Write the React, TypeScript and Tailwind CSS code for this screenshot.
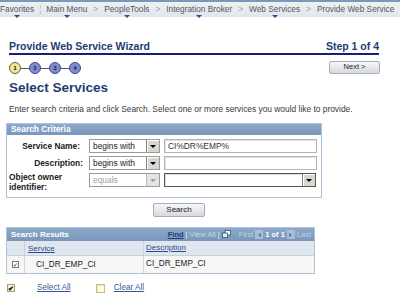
import React from "react";

const crumbs = [
  { label: "Favorites", mark: true },
  { label: "Main Menu", mark: true },
  { label: "PeopleTools", mark: true },
  { label: "Integration Broker", mark: true },
  { label: "Web Services", mark: true },
  { label: "Provide Web Service", mark: false },
];

function DropBtn() {
  return (
    <span className="flex h-full w-[13px] items-center justify-center border-l border-[#808080] bg-[#d8d6d0] shadow-[inset_1px_1px_0_#fff]">
      <span className="h-0 w-0 border-x-[3px] border-t-[3px] border-x-transparent border-t-black" />
    </span>
  );
}

function Select({ value, disabled }: { value: string; disabled?: boolean }) {
  return (
    <div className="flex h-[14px] w-[71px] items-stretch border border-[#9a9a9a] bg-white">
      <span className={`flex-1 pl-[3px] leading-[12px] ${disabled ? "text-[#a0a0a0]" : "text-[#222]"}`}>{value}</span>
      {disabled ? (
        <span className="flex h-full w-[13px] items-center justify-center border-l border-[#b8b8b8] bg-[#e4e4e4]">
          <span className="h-0 w-0 border-x-[3px] border-t-[3px] border-x-transparent border-t-[#a0a0a0]" />
        </span>
      ) : (
        <DropBtn />
      )}
    </div>
  );
}

function Input({ value }: { value?: string }) {
  return (
    <div className="h-[14px] w-[153px] border border-[#b4b4b4] bg-white pl-[3px] leading-[12px] text-[#333] shadow-[inset_1px_1px_0_#e0e0e0]">
      {value}
    </div>
  );
}

function Circle({ n, active }: { n: number; active?: boolean }) {
  return (
    <span
      className={`flex h-[12px] w-[12px] items-center justify-center rounded-full border text-[5.5px] font-bold ${
        active ? "border-[#6b6030] bg-[#f6e39a] text-black" : "border-[#3e4a8a] bg-[#7f8ad0] text-[#10184a]"
      }`}
    >
      {n}
    </span>
  );
}

export default function App() {
  return (
    <div className="relative h-[298px] w-[400px] overflow-hidden bg-white text-[8.4px] text-[#333]" style={{ fontFamily: '"Liberation Sans", Arial, sans-serif' }}>
      {/* breadcrumb bar */}
      <div className="flex h-[17px] items-center whitespace-nowrap border-t-2 border-[#7b98bb] bg-gradient-to-b from-[#eef0f3] to-[#e2e5ea] pb-[1px] text-[8.3px] text-[#505862]">
        {crumbs.map((c, i) => (
          <React.Fragment key={c.label}>
            {i === 1 && <span className="mx-[5px] text-[#b0b4ba]">¦</span>}
            {i > 1 && <span className="mx-[6px] text-[#9aa0a8]">&gt;</span>}
            <span className="relative">
              {c.label}
              {c.mark && (
                <span className="absolute bottom-[-3px] left-1/2 h-0 w-0 -translate-x-1/2 border-x-[3px] border-t-[3px] border-x-transparent border-t-[#2a4c9a]" />
              )}
            </span>
          </React.Fragment>
        ))}
      </div>

      {/* wizard header */}
      <div className="ml-[9px] mt-[23px] w-[370px]">
        <div className="flex items-end justify-between border-b-2 border-[#1c1c78] pb-[1px] text-[10.5px] font-bold leading-[12px] text-[#1e3a78]">
          <span>Provide Web Service Wizard</span>
          <span>Step 1 of 4</span>
        </div>
        <div className="mt-[5px] flex items-center justify-between">
          <div className="mt-[2px] flex items-center">
            <Circle n={1} active />
            <span className="h-px w-[8px] bg-[#555]" />
            <Circle n={2} />
            <span className="h-px w-[8px] bg-[#555]" />
            <Circle n={3} />
            <span className="h-px w-[8px] bg-[#555]" />
            <Circle n={4} />
          </div>
          <button className="mr-[-1px] flex h-[13px] w-[51px] items-center justify-center rounded-[2px] border border-[#a8acb4] bg-gradient-to-b from-[#f6f7f9] to-[#d6dae0] text-[7.5px] text-[#222]">
            Next &gt;
          </button>
        </div>
        <div className="mt-[6px] text-[13.5px] font-bold leading-[16px] text-[#1f3c74]">Select Services</div>
        <div className="mt-[8px] leading-[10px] text-[#3a3a3a]">
          Enter search criteria and click Search. Select one or more services you would like to provide.
        </div>
      </div>

      {/* search criteria */}
      <div className="ml-[6px] mt-[9px] w-[316px] border border-[#b0c2d8]">
        <div className="flex h-[11px] items-center bg-gradient-to-b from-[#8eaacb] to-[#7896bb] pl-[4px] text-[8.4px] font-bold text-white">
          Search Criteria
        </div>
        <div className="flex flex-col gap-[3px] pb-[5px] pt-[4px]">
          <div className="flex items-center">
            <span className="w-[76px] pr-[3px] text-right font-bold text-[#222]">Service Name:</span>
            <span className="ml-[6px]" />
            <Select value="begins with" />
            <span className="ml-[4px]" />
            <Input value="CI%DR%EMP%" />
          </div>
          <div className="flex items-center">
            <span className="w-[76px] text-right font-bold text-[#222]">Description:</span>
            <span className="ml-[6px]" />
            <Select value="begins with" />
            <span className="ml-[4px]" />
            <Input />
          </div>
          <div className="flex items-start">
            <span className="w-[76px] pl-[2px] font-bold leading-[9.5px] text-[#222]">
              Object owner
              <br />
              identifier:
            </span>
            <span className="ml-[6px]" />
            <Select value="equals" disabled />
            <span className="ml-[4px]" />
            <div className="flex h-[14px] w-[152px] items-stretch border border-[#555] bg-white shadow-[inset_1px_1px_0_#ddd]">
              <span className="flex-1" />
              <DropBtn />
            </div>
          </div>
        </div>
      </div>

      <div className="ml-[153px] mt-[5px]">
        <button className="flex h-[14px] w-[52px] items-center justify-center rounded-[2px] border border-[#a8acb4] bg-gradient-to-b from-[#f6f7f9] to-[#d6dae0] text-[8px] text-[#222]">
          Search
        </button>
      </div>

      {/* search results */}
      <div className="ml-[6px] mt-[10px] w-[309px] border border-[#b0c2d8]">
        <div className="flex h-[13px] items-center justify-between bg-gradient-to-b from-[#8eaacb] to-[#7896bb] pl-[4px] pr-[3px] text-[8px]">
          <span className="font-bold text-white">Search Results</span>
          <span className="flex items-center gap-[2px] text-[7.5px]">
            <span className="font-bold text-[#1e3a78] underline">Find</span>
            <span className="text-[#e8eef6]">|</span>
            <span className="text-[#c9d6e6]">View All</span>
            <span className="text-[#e8eef6]">|</span>
            <svg width="9" height="8" viewBox="0 0 9 8" className="mb-[2px]">
              <rect x="3" y="0.5" width="5.5" height="4.5" fill="#fff" stroke="#33507a" strokeWidth="0.8" />
              <rect x="0.5" y="3" width="5" height="4.5" fill="#e8eef6" stroke="#33507a" strokeWidth="0.8" />
            </svg>
            <span className="ml-[6px] text-[#c2d0e2]">First</span>
            <span className="flex h-[9px] w-[8px] items-center justify-center bg-[#a9bdd6]">
              <span className="h-0 w-0 border-y-[2.5px] border-r-[3px] border-y-transparent border-r-[#5a7498]" />
            </span>
            <span className="font-bold text-white">1 of 1</span>
            <span className="flex h-[9px] w-[8px] items-center justify-center bg-[#a9bdd6]">
              <span className="h-0 w-0 border-y-[2.5px] border-l-[3px] border-y-transparent border-l-[#5a7498]" />
            </span>
            <span className="text-[#c2d0e2]">Last</span>
          </span>
        </div>
        <div className="flex h-[15px] items-center border-b border-[#c8d0da] bg-[#dfe6ee] text-[8px] text-[#2a4c86]">
          <span className="h-full w-[18px] border-r border-[#c8d0da]" />
          <span className="h-full w-[119px] border-r border-[#c8d0da] pl-[3px] leading-[15px] underline">Service</span>
          <span className="pl-[2px] underline">Description</span>
        </div>
        <div className="flex h-[17px] items-center bg-[#f6f6f6] text-[8.2px] text-[#222]">
          <span className="flex h-full w-[18px] items-center justify-center border-r border-[#d4d4d4]">
            <span className="flex h-[7px] w-[7px] items-center justify-center border border-[#777] bg-white text-[6px] leading-none text-black">✓</span>
          </span>
          <span className="h-full w-[119px] border-r border-[#d4d4d4] pl-[11px] leading-[17px]">CI_DR_EMP_CI</span>
          <span className="pl-[2px]">CI_DR_EMP_CI</span>
        </div>
      </div>

      {/* bottom links */}
      <div className="ml-[7px] mt-[8px] flex items-center text-[8.2px] text-[#3a5a92]">
        <span className="flex h-[8px] w-[8px] items-center justify-center border border-[#a8a070] bg-[#f4f0d8] text-[7px] font-bold leading-none text-black">✔</span>
        <span className="ml-[22px] underline">Select All</span>
        <span className="ml-[25px] h-[9px] w-[9px] border border-[#c8c080] bg-[#fffbe8] shadow-[inset_1px_1px_0_#e8e0b0]" />
        <span className="ml-[9px] underline">Clear All</span>
      </div>
    </div>
  );
}
